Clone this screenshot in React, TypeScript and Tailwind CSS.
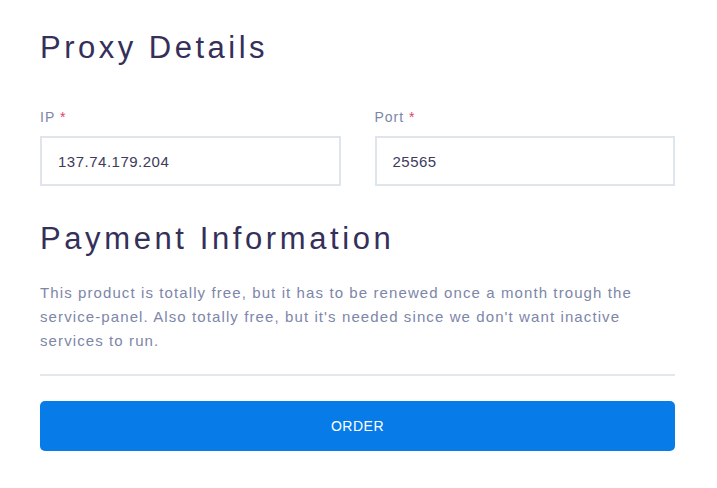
export default function App() {
  const font = { fontFamily: '"Liberation Sans", Arial, sans-serif' };
  return (
    <div className="min-h-screen bg-white pl-[40px] pr-[42px] pt-[28px] text-[#34305a]" style={font}>
      <h2 className="text-[31px] leading-[40px] tracking-[3.5px] font-normal">Proxy Details</h2>
      <div className="mt-[39px] grid grid-cols-2 gap-[34px]">
        <div>
          <label className="block text-[14px] leading-[20px] tracking-[1px] text-[#7d86a9]">
            IP <span className="text-[#e0416b]">*</span>
          </label>
          <input
            readOnly
            value="137.74.179.204"
            className="mt-[9px] block h-[50px] w-full border-2 border-[#dfe5ec] px-[16px] text-[15px] tracking-[0.5px] text-[#3e3a5c] outline-none"
            style={font}
          />
        </div>
        <div>
          <label className="block text-[14px] leading-[20px] tracking-[1px] text-[#7d86a9]">
            Port <span className="text-[#e0416b]">*</span>
          </label>
          <input
            readOnly
            value="25565"
            className="mt-[9px] block h-[50px] w-full border-2 border-[#dfe5ec] px-[16px] text-[15px] tracking-[0.5px] text-[#3e3a5c] outline-none"
            style={font}
          />
        </div>
      </div>
      <h2 className="mt-[33px] text-[31px] leading-[40px] tracking-[3.6px] font-normal">Payment Information</h2>
      <p className="mt-[22px] text-[15px] leading-[24px] tracking-[1.1px] text-[#7d86a9]">
        This product is totally free, but it has to be renewed once a month trough the service-panel. Also totally free, but it's needed since we don't want inactive services to run.
      </p>
      <div className="mt-[21px] h-[2px] bg-[#e3e8ec]" />
      <button
        className="mt-[25px] block h-[50px] w-full rounded-[5px] bg-[#077be8] text-[14px] tracking-[0.5px] text-white"
        style={font}
      >
        ORDER
      </button>
    </div>
  );
}
